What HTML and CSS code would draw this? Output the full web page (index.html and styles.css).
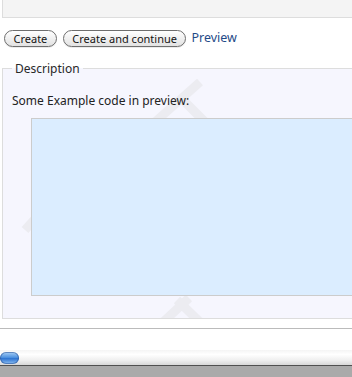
FILE: index.html
```html
<!DOCTYPE html>
<html>
	<head>
		<title>Create</title>
		<link rel="stylesheet" href="styles.css">
	</head>
	<body>
		<div id="page">
			<div id="top-box"></div>

			<div id="actions">
				<button type="button" class="btn">Create</button>
				<button type="button" class="btn">Create and continue</button>
				<a href="#" id="preview-link">Preview</a>
			</div>

			<fieldset id="description">
				<legend>Description</legend>
				<svg id="watermark" width="350" height="250" viewBox="0 0 350 250">
					<g stroke="#ececf1" stroke-width="9" fill="none">
						<line x1="197" y1="5" x2="152" y2="45" />
						<line x1="178" y1="21" x2="204" y2="47" />
						<line x1="186" y1="221" x2="158" y2="247" />
						<line x1="174" y1="223" x2="199" y2="247" />
						<line x1="31" y1="143" x2="22" y2="153" />
					</g>
				</svg>
				<p class="intro">Some Example code in preview:</p>
				<div id="preview-box"></div>
			</fieldset>
		</div>

		<hr id="divider">

		<div id="scrollbar">
			<div id="thumb"></div>
		</div>
		<div id="status"></div>
	</body>
</html>
```

FILE: styles.css
```css
html {
	height: 100%;
}

body {
	margin: 0;
	height: 100%;
	overflow: hidden;
	font-family: "Noto Sans", "DejaVu Sans", sans-serif;
	font-size: 12px;
	color: rgb(34, 34, 34);
	background-color: #fff;
}

#page {
	padding-left: 2px;
}

#top-box {
	height: 17px;
	background-color: rgb(244, 244, 244);
	border: 1px solid rgb(221, 221, 221);
	border-top: none;
	border-right: none;
}

#actions {
	display: flex;
	align-items: center;
	margin-top: 12px;
	padding-left: 2px;
	height: 17px;
}

.btn {
	font-family: "Noto Sans", "DejaVu Sans", sans-serif;
	font-size: 11px;
	height: 17px;
	padding: 0 8.5px;
	margin-right: 6px;
	border: 1px solid rgb(110, 110, 110);
	border-radius: 9px;
	background: linear-gradient(to bottom, #fff, #f0f0f0 50%, #e2e2e2);
	color: rgb(20, 20, 20);
	line-height: 15px;
	box-shadow: 0 1px 0 rgba(0, 0, 0, 0.08);
}

#preview-link {
	font-size: 12.5px;
	color: rgb(31, 74, 135);
	text-decoration: none;
	margin-left: -1px;
	margin-top: -3px;
}

#description {
	position: relative;
	overflow: hidden;
	margin: 13px 0 0 0;
	padding: 0 0 0 8px;
	height: 257px;
	background-color: rgb(246, 246, 254);
	border: 1px solid rgb(221, 221, 221);
	border-right: none;
}

#description legend {
	padding: 0 3px;
	margin-left: 1px;
	font-size: 12px;
	color: rgb(40, 40, 40);
}

#watermark {
	/* 透かし：背景に薄く重ねる */
	position: absolute;
	top: 0;
	left: 0;
	pointer-events: none;
}

.intro {
	position: relative;
	margin: 16px 0 0 1px;
	line-height: 16px;
}

#preview-box {
	position: relative;
	margin: 9px 0 0 20px;
	height: 176px;
	background-color: rgb(219, 237, 255);
	border: 1px solid rgb(204, 204, 204);
	border-right: none;
}

#divider {
	margin: 9px 0 0 0;
	border: none;
	border-top: 1px solid rgb(187, 187, 187);
	height: 0;
}

#scrollbar {
	margin-top: 21px;
	height: 15px;
	background: linear-gradient(to bottom, #f4f4f4, #fff 30%, #eee 70%, #d8d8d8);
	border-bottom: 1px solid rgb(80, 80, 80);
	display: flex;
	align-items: center;
}

#thumb {
	width: 19px;
	height: 12px;
	border-radius: 6px;
	background: linear-gradient(to bottom, #a9cff5, #4f93e0 45%, #2f74d0 55%, #8ec0f3);
	box-shadow: inset 0 0 0 1px rgba(30, 70, 140, 0.5);
}

#status {
	height: 20px;
	background-color: rgb(170, 170, 170);
}
```
